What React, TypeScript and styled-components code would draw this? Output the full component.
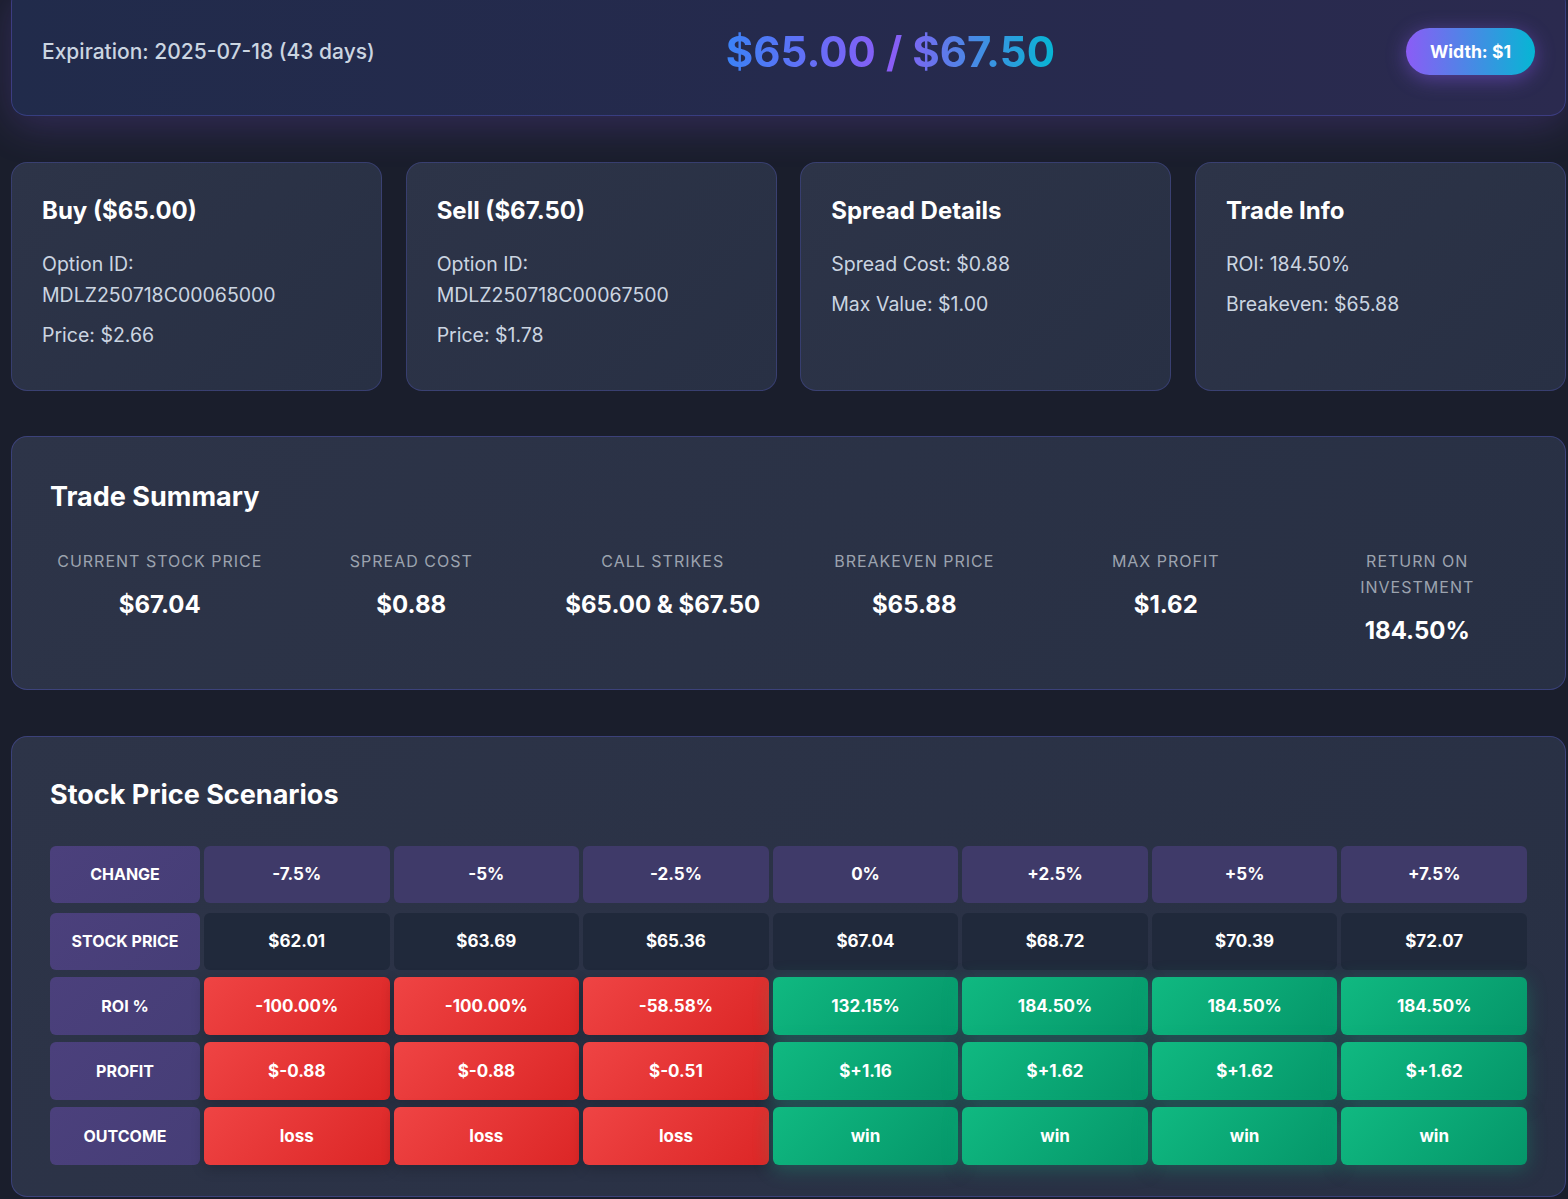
import React from "react";
import styled, { createGlobalStyle, css } from "styled-components";

const GlobalStyle = createGlobalStyle`
  html, body {
    margin: 0;
    padding: 0;
    background: #1a1e2c;
    font-family: Inter, "Noto Sans", "Liberation Sans", sans-serif;
    color: #e2e8f0;
  }
  * { box-sizing: border-box; }
`;

const Page = styled.div`
  width: 1555px;
  margin: -13px 0 0 11px;
  display: flex;
  flex-direction: column;
  gap: 45.5px;
  padding-bottom: 40px;
`;

const Header = styled.header`
  display: flex;
  align-items: center;
  justify-content: space-between;
  padding: 37px 30px;
  border-radius: 16px;
  border: 1px solid rgba(99, 102, 241, 0.32);
  background: linear-gradient(90deg, #212b4b 0%, #252a4d 50%, #2b2a4f 100%);
  box-shadow: 0 10px 40px rgba(139, 92, 246, 0.22);
`;

const Expiration = styled.div`
  font-size: 21px;
  font-weight: 500;
  color: #cbd5e1;
`;

const StrikeTitle = styled.h1`
  margin: 0;
  font-size: 42px;
  line-height: 53px;
  font-weight: 700;
  background: linear-gradient(90deg, #3b82f6 0%, #8b5cf6 50%, #06b6d4 100%);
  -webkit-background-clip: text;
  background-clip: text;
  color: transparent;
`;

const WidthBadge = styled.div`
  padding: 12px 24px;
  border-radius: 999px;
  font-size: 17.6px;
  line-height: 23px;
  font-weight: 700;
  color: #ffffff;
  background: linear-gradient(90deg, #8b5cf6 0%, #06b6d4 100%);
  box-shadow: 0 4px 20px rgba(139, 92, 246, 0.45);
`;

const CardGrid = styled.section`
  display: grid;
  grid-template-columns: repeat(4, 1fr);
  gap: 23.5px;
`;

const Card = styled.div`
  padding: 29px 30px 30px;
  border-radius: 16px;
  border: 1px solid rgba(99, 102, 241, 0.25);
  background: linear-gradient(135deg, #2d3448 0%, #283044 100%);
`;

const CardTitle = styled.h3`
  margin: 0 0 19px;
  font-size: 24px;
  line-height: 38px;
  font-weight: 700;
  color: #ffffff;
`;

const CardLine = styled.p`
  margin: 0 0 9px;
  font-size: 19.5px;
  line-height: 31px;
  color: #cbd5e1;
  word-break: break-word;
`;

const Panel = styled.section<{ $bottom?: number }>`
  padding: 40px 38px ${(p) => p.$bottom ?? 40}px;
  border-radius: 16px;
  border: 1px solid rgba(99, 102, 241, 0.3);
  background: linear-gradient(135deg, #2d3448 0%, #283044 100%);
`;

const PanelTitle = styled.h2<{ $lh: number; $mb: number }>`
  margin: 0 0 ${(p) => p.$mb}px;
  font-size: 27px;
  line-height: ${(p) => p.$lh}px;
  font-weight: 700;
  color: #ffffff;
`;

const StatGrid = styled.div`
  display: grid;
  grid-template-columns: repeat(6, 1fr);
  gap: 32px;
`;

const Stat = styled.div`
  text-align: center;
`;

const StatLabel = styled.div`
  font-size: 16px;
  line-height: 26px;
  letter-spacing: 1px;
  text-transform: uppercase;
  color: #9ca3af;
  margin-bottom: 16px;
`;

const StatValue = styled.div`
  font-size: 24px;
  line-height: 29px;
  font-weight: 700;
  color: #ffffff;
`;

const Table = styled.div`
  display: grid;
  grid-template-columns: 150px repeat(7, 1fr);
  column-gap: 4px;
  row-gap: 7px;
`;

type CellKind = "label" | "head" | "price" | "win" | "loss";

const cellStyles: Record<CellKind, ReturnType<typeof css>> = {
  label: css`
    background: linear-gradient(135deg, #4b407c 0%, #463e77 100%);
  `,
  head: css`
    background: #3f3a69;
  `,
  price: css`
    background: #20293b;
  `,
  win: css`
    background: linear-gradient(135deg, #10b981 0%, #059669 100%);
    box-shadow: 0 4px 20px rgba(16, 185, 129, 0.3);
  `,
  loss: css`
    background: linear-gradient(135deg, #ef4444 0%, #dc2626 100%);
    box-shadow: 0 4px 14px rgba(0, 0, 0, 0.2);
  `,
};

const Cell = styled.div<{ $kind: CellKind; $h: number; $label?: boolean; $after?: number }>`
  height: ${(p) => p.$h}px;
  margin-bottom: ${(p) => p.$after ?? 0}px;
  display: flex;
  align-items: center;
  justify-content: center;
  border-radius: 6px;
  font-size: ${(p) => (p.$label ? 16 : 17)}px;
  font-weight: 700;
  color: #ffffff;
  ${(p) => cellStyles[p.$kind]}
`;

const changes = ["-7.5%", "-5%", "-2.5%", "0%", "+2.5%", "+5%", "+7.5%"];
const prices = ["$62.01", "$63.69", "$65.36", "$67.04", "$68.72", "$70.39", "$72.07"];
const rois = ["-100.00%", "-100.00%", "-58.58%", "132.15%", "184.50%", "184.50%", "184.50%"];
const profits = ["$-0.88", "$-0.88", "$-0.51", "$+1.16", "$+1.62", "$+1.62", "$+1.62"];
const outcomes = ["loss", "loss", "loss", "win", "win", "win", "win"];

const stats = [
  { label: "Current Stock Price", value: "$67.04" },
  { label: "Spread Cost", value: "$0.88" },
  { label: "Call Strikes", value: "$65.00 & $67.50" },
  { label: "Breakeven Price", value: "$65.88" },
  { label: "Max Profit", value: "$1.62" },
  { label: "Return on Investment", value: "184.50%" },
];

export default function App() {
  const kindFor = (i: number): CellKind => (outcomes[i] === "win" ? "win" : "loss");
  return (
    <>
      <GlobalStyle />
      <Page>
        <Header>
          <Expiration>Expiration: 2025-07-18 (43 days)</Expiration>
          <StrikeTitle>$65.00 / $67.50</StrikeTitle>
          <WidthBadge>Width: $1</WidthBadge>
        </Header>

        <CardGrid>
          <Card>
            <CardTitle>Buy ($65.00)</CardTitle>
            <CardLine>Option ID: MDLZ250718C00065000</CardLine>
            <CardLine>Price: $2.66</CardLine>
          </Card>
          <Card>
            <CardTitle>Sell ($67.50)</CardTitle>
            <CardLine>Option ID: MDLZ250718C00067500</CardLine>
            <CardLine>Price: $1.78</CardLine>
          </Card>
          <Card>
            <CardTitle>Spread Details</CardTitle>
            <CardLine>Spread Cost: $0.88</CardLine>
            <CardLine>Max Value: $1.00</CardLine>
          </Card>
          <Card>
            <CardTitle>Trade Info</CardTitle>
            <CardLine>ROI: 184.50%</CardLine>
            <CardLine>Breakeven: $65.88</CardLine>
          </Card>
        </CardGrid>

        <Panel $bottom={44}>
          <PanelTitle $lh={40} $mb={31}>Trade Summary</PanelTitle>
          <StatGrid>
            {stats.map((s) => (
              <Stat key={s.label}>
                <StatLabel>{s.label}</StatLabel>
                <StatValue>{s.value}</StatValue>
              </Stat>
            ))}
          </StatGrid>
        </Panel>

        <Panel $bottom={31}>
          <PanelTitle $lh={36} $mb={33}>Stock Price Scenarios</PanelTitle>
          <Table>
            <Cell $kind="label" $h={57} $after={3} $label>CHANGE</Cell>
            {changes.map((c, i) => (
              <Cell key={"c" + i} $kind="head" $h={57} $after={3}>{c}</Cell>
            ))}
            <Cell $kind="label" $h={57} $label>STOCK PRICE</Cell>
            {prices.map((c, i) => (
              <Cell key={"p" + i} $kind="price" $h={57}>{c}</Cell>
            ))}
            <Cell $kind="label" $h={58} $label>ROI %</Cell>
            {rois.map((c, i) => (
              <Cell key={"r" + i} $kind={kindFor(i)} $h={58}>{c}</Cell>
            ))}
            <Cell $kind="label" $h={58} $label>PROFIT</Cell>
            {profits.map((c, i) => (
              <Cell key={"f" + i} $kind={kindFor(i)} $h={58}>{c}</Cell>
            ))}
            <Cell $kind="label" $h={58} $label>OUTCOME</Cell>
            {outcomes.map((c, i) => (
              <Cell key={"o" + i} $kind={kindFor(i)} $h={58}>{c}</Cell>
            ))}
          </Table>
        </Panel>
      </Page>
    </>
  );
}
